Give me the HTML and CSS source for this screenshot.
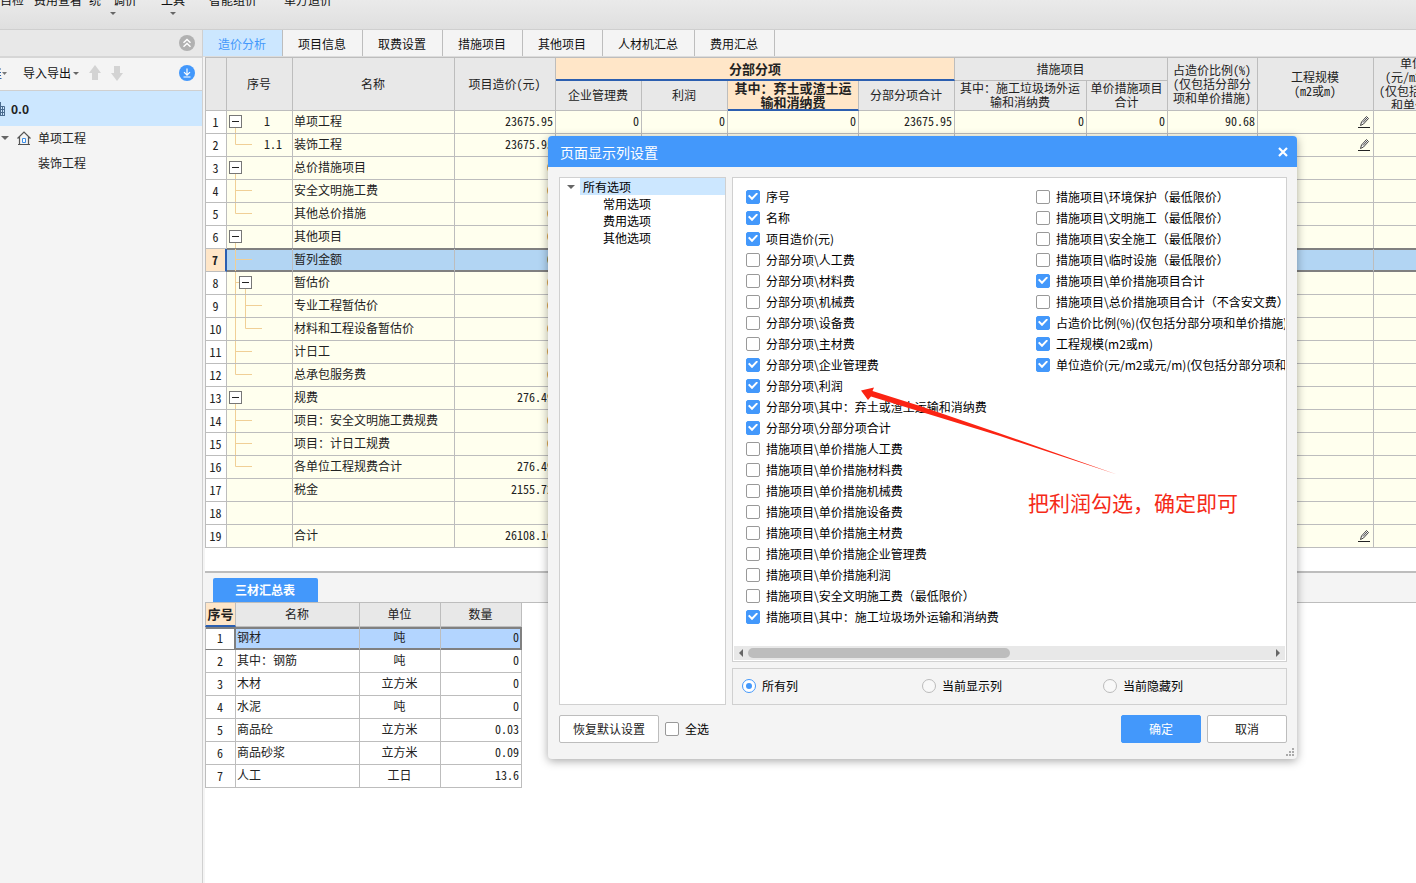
FILE: index.html
```html
<!DOCTYPE html>
<html lang="zh-CN">
<head>
<meta charset="utf-8">
<title>造价分析</title>
<link rel="stylesheet" href="styles.css">
</head>
<body>
<svg class="defs" aria-hidden="true">
  <symbol id="t-root" viewBox="0 0 37 22"><path class="ln" d="M8.5 17v5"/><rect class="bx" x="2.500" y="4.500" width="12" height="12"/><path class="mn" d="M5 10.500h7"/></symbol>
  <symbol id="t-mid" viewBox="0 0 37 22"><path class="ln" d="M8.500 0v22M8 10.500h17"/></symbol>
  <symbol id="t-last" viewBox="0 0 37 22"><path class="ln" d="M8.500 0v10.500H25"/></symbol>
  <symbol id="t-sub" viewBox="0 0 37 22"><path class="ln" d="M8.500 0v22M8 10.500h4M18.500 17v5"/><rect class="bx" x="12.500" y="4.500" width="12" height="12"/><path class="mn" d="M15 10.500h7"/></symbol>
  <symbol id="t-submid" viewBox="0 0 37 22"><path class="ln" d="M8.500 0v22M18.500 0v22M18 10.500h17"/></symbol>
  <symbol id="t-sublast" viewBox="0 0 37 22"><path class="ln" d="M8.500 0v22M18.500 0v10.500H35"/></symbol>
  <symbol id="pencil" viewBox="0 0 12 14"><path d="M2.500 10.500 3.500 7 8.500 1.500l2 2L5.500 9z" fill="#fff" stroke="#444" stroke-width="1"/><path d="M5 7.500l4-4.500" stroke="#444" stroke-width="1"/><path d="M0 12.500h12" stroke="#222"/></symbol>
</svg>
<div class="app">
  <header class="ribbon">
    <button class="rb rb1">自检</button>
    <button class="rb rb2">费用查看</button>
    <button class="rb rb3">统一调价<i class="caret"></i></button>
    <button class="rb rb3">工具<i class="caret"></i></button>
    <button class="rb rb4">智能组价</button>
    <button class="rb rb5">单方造价</button>
  </header>
  <div class="work">
    <aside class="side">
      <div class="side-head">
        <button class="icon-btn" aria-label="收起"><svg width="16" height="16" viewBox="0 0 16 16"><circle cx="8" cy="8" r="8" fill="#b1b1b1"/><path d="M4.500 7.700 8 4.500l3.500 3.200M4.500 11.700 8 8.500l3.500 3.200" fill="none" stroke="#fff" stroke-width="1.500"/></svg></button>
      </div>
      <div class="side-tools">
        <button class="tool cut" aria-label="新建"><svg width="8" height="14" viewBox="0 0 8 14"><path d="M0 3h1M0 6.500h1M0 9.500h1M0 12.500h1.500" stroke="#2f66a8"/><path d="M2 6h5L4.500 9z" fill="#777"/></svg></button>
        <button class="tool">导入导出<i class="caret"></i></button>
        <button class="tool up" aria-label="上移"><svg width="12" height="16" viewBox="0 0 12 16"><path d="M6 0l6 8H9v7H3V8H0z" fill="#d3d3d3"/></svg></button>
        <button class="tool down" aria-label="下移"><svg width="12" height="16" viewBox="0 0 12 16"><path d="M6 16l6-8H9V1H3v7H0z" fill="#d3d3d3"/></svg></button>
        <button class="icon-btn" aria-label="下载"><svg width="16" height="16" viewBox="0 0 16 16"><circle cx="8" cy="8" r="8" fill="#4398fb"/><path d="M8 3.500v6.500M5 7.200l3 3 3-3M4.500 12h7" fill="none" stroke="#fff" stroke-width="1.200"/></svg></button>
      </div>
      <div class="node current"><svg width="6" height="16" viewBox="0 0 6 16"><path d="M.5 1v13.500M0 1.500h1M.5 5.500h4V15M0 14.500h5M1 8.500h3M1 11.500h3M2.500 6v8" fill="none" stroke="#4a6b8f"/></svg><b>0.0</b></div>
      <div class="node project"><i class="caret big"></i><svg width="14" height="14" viewBox="0 0 14 14"><path d="M.5 7.500 7 1l6.500 6.500M2.500 6v7.500M11.500 6v7.500M1 13.500h12" fill="none" stroke="#555" stroke-width="1.200"/><path d="M5.500 11.500V7.500h3v4z" fill="#fff" stroke="#3d8fe8"/></svg><span>单项工程</span></div>
      <div class="node leaf">装饰工程</div>
    </aside>
    <main class="main">
      <nav class="tabs">
        <button class="tab on">造价分析</button><button class="tab">项目信息</button><button class="tab">取费设置</button><button class="tab">措施项目</button><button class="tab">其他项目</button><button class="tab">人材机汇总</button><button class="tab">费用汇总</button>
      </nav>
      <section class="upper">
        <table class="grid cost">
          <colgroup><col class="w22"><col class="w66"><col class="w162"><col class="w101"><col class="w86"><col class="w86"><col class="w131"><col class="w96"><col class="w132"><col class="w81"><col class="w90"><col class="w116"><col class="w102"></colgroup>
          <thead>
            <tr class="h1"><th rowspan="2"></th><th rowspan="2">序号</th><th rowspan="2">名称</th><th rowspan="2">项目造价(元)</th><th colspan="4" class="hot">分部分项</th><th colspan="2">措施项目</th><th rowspan="2">占造价比例(%)<br>(仅包括分部分<br>项和单价措施)</th><th rowspan="2">工程规模<br>(m2或m)</th><th rowspan="2"><div class="tall">单位造价<br>(元/m2或元/m)<br>(仅包括分部分项<br>和单价措施)</div></th></tr>
            <tr class="h2"><th>企业管理费</th><th>利润</th><th class="hot">其中：弃土或渣土运<br>输和消纳费</th><th>分部分项合计</th><th>其中：施工垃圾场外运<br>输和消纳费</th><th>单价措施项目<br>合计</th></tr>
          </thead>
          <tbody>
            <tr><th>1</th><td class="tr"><div><svg><use href="#t-root"/></svg><span>1</span></div></td><td>单项工程</td><td class="n">23675.95</td><td class="n">0</td><td class="n">0</td><td class="n">0</td><td class="n">23675.95</td><td class="n">0</td><td class="n">0</td><td class="n">90.68</td><td class="ed"><svg><use href="#pencil"/></svg></td><td></td></tr>
            <tr><th>2</th><td class="tr"><div><svg><use href="#t-last"/></svg><span>1.1</span></div></td><td>装饰工程</td><td class="n">23675.95</td><td></td><td></td><td></td><td></td><td></td><td></td><td></td><td class="ed"><svg><use href="#pencil"/></svg></td><td></td></tr>
            <tr><th>3</th><td class="tr"><div><svg><use href="#t-root"/></svg></div></td><td>总价措施项目</td><td class="n">0</td><td></td><td></td><td></td><td></td><td></td><td></td><td></td><td></td><td></td></tr>
            <tr><th>4</th><td class="tr"><div><svg><use href="#t-mid"/></svg></div></td><td>安全文明施工费</td><td class="n">0</td><td></td><td></td><td></td><td></td><td></td><td></td><td></td><td></td><td></td></tr>
            <tr><th>5</th><td class="tr"><div><svg><use href="#t-last"/></svg></div></td><td>其他总价措施</td><td class="n">0</td><td></td><td></td><td></td><td></td><td></td><td></td><td></td><td></td><td></td></tr>
            <tr><th>6</th><td class="tr"><div><svg><use href="#t-root"/></svg></div></td><td>其他项目</td><td class="n">0</td><td></td><td></td><td></td><td></td><td></td><td></td><td></td><td></td><td></td></tr>
            <tr class="sel"><th>7</th><td class="tr"><div><svg><use href="#t-mid"/></svg></div></td><td>暂列金额</td><td class="n">0</td><td></td><td></td><td></td><td></td><td></td><td></td><td></td><td></td><td></td></tr>
            <tr><th>8</th><td class="tr"><div><svg><use href="#t-sub"/></svg></div></td><td>暂估价</td><td class="n">0</td><td></td><td></td><td></td><td></td><td></td><td></td><td></td><td></td><td></td></tr>
            <tr><th>9</th><td class="tr"><div><svg><use href="#t-submid"/></svg></div></td><td>专业工程暂估价</td><td class="n">0</td><td></td><td></td><td></td><td></td><td></td><td></td><td></td><td></td><td></td></tr>
            <tr><th>10</th><td class="tr"><div><svg><use href="#t-sublast"/></svg></div></td><td>材料和工程设备暂估价</td><td class="n">0</td><td></td><td></td><td></td><td></td><td></td><td></td><td></td><td></td><td></td></tr>
            <tr><th>11</th><td class="tr"><div><svg><use href="#t-mid"/></svg></div></td><td>计日工</td><td class="n">0</td><td></td><td></td><td></td><td></td><td></td><td></td><td></td><td></td><td></td></tr>
            <tr><th>12</th><td class="tr"><div><svg><use href="#t-last"/></svg></div></td><td>总承包服务费</td><td class="n">0</td><td></td><td></td><td></td><td></td><td></td><td></td><td></td><td></td><td></td></tr>
            <tr><th>13</th><td class="tr"><div><svg><use href="#t-root"/></svg></div></td><td>规费</td><td class="n">276.49</td><td></td><td></td><td></td><td></td><td></td><td></td><td></td><td></td><td></td></tr>
            <tr><th>14</th><td class="tr"><div><svg><use href="#t-mid"/></svg></div></td><td>项目：安全文明施工费规费</td><td class="n">0</td><td></td><td></td><td></td><td></td><td></td><td></td><td></td><td></td><td></td></tr>
            <tr><th>15</th><td class="tr"><div><svg><use href="#t-mid"/></svg></div></td><td>项目：计日工规费</td><td class="n">0</td><td></td><td></td><td></td><td></td><td></td><td></td><td></td><td></td><td></td></tr>
            <tr><th>16</th><td class="tr"><div><svg><use href="#t-last"/></svg></div></td><td>各单位工程规费合计</td><td class="n">276.49</td><td></td><td></td><td></td><td></td><td></td><td></td><td></td><td></td><td></td></tr>
            <tr><th>17</th><td></td><td>税金</td><td class="n">2155.72</td><td></td><td></td><td></td><td></td><td></td><td></td><td></td><td></td><td></td></tr>
            <tr><th>18</th><td></td><td></td><td></td><td></td><td></td><td></td><td></td><td></td><td></td><td></td><td></td><td></td></tr>
            <tr><th>19</th><td></td><td>合计</td><td class="n">26108.16</td><td></td><td></td><td></td><td></td><td></td><td></td><td></td><td class="ed"><svg><use href="#pencil"/></svg></td><td></td></tr>
          </tbody>
        </table>
      </section>
      <section class="lower">
        <div class="lower-bar"><button class="lower-tab">三材汇总表</button></div>
        <table class="grid mat">
          <colgroup><col class="w31"><col class="w124"><col class="w81"><col class="w81"></colgroup>
          <thead><tr><th class="hot">序号</th><th>名称</th><th>单位</th><th>数量</th></tr></thead>
          <tbody>
            <tr class="sel"><th>1</th><td>钢材</td><td class="c">吨</td><td class="n">0</td></tr>
            <tr><th>2</th><td>其中：钢筋</td><td class="c">吨</td><td class="n">0</td></tr>
            <tr><th>3</th><td>木材</td><td class="c">立方米</td><td class="n">0</td></tr>
            <tr><th>4</th><td>水泥</td><td class="c">吨</td><td class="n">0</td></tr>
            <tr><th>5</th><td>商品砼</td><td class="c">立方米</td><td class="n">0.03</td></tr>
            <tr><th>6</th><td>商品砂浆</td><td class="c">立方米</td><td class="n">0.09</td></tr>
            <tr><th>7</th><td>人工</td><td class="c">工日</td><td class="n">13.6</td></tr>
          </tbody>
        </table>
      </section>
    </main>
  </div>
</div>

<div class="dialog" role="dialog" aria-labelledby="dlg-title">
  <div class="dlg-head"><h2 id="dlg-title">页面显示列设置</h2><button aria-label="关闭"><svg width="10" height="10" viewBox="0 0 10 10"><path d="M1 1l8 8M9 1l-8 8" stroke="#fff" stroke-width="2.200"/></svg></button></div>
  <div class="dlg-body">
    <div class="panes">
      <ul class="tree">
        <li class="top"><i class="caret big"></i><span>所有选项</span></li>
        <li>常用选项</li><li>费用选项</li><li>其他选项</li>
      </ul>
      <div class="right">
        <div class="opts">
          <div class="cols">
            <div class="col">
              <label><input type="checkbox" checked>序号</label>
              <label><input type="checkbox" checked>名称</label>
              <label><input type="checkbox" checked>项目造价(元)</label>
              <label><input type="checkbox">分部分项\人工费</label>
              <label><input type="checkbox">分部分项\材料费</label>
              <label><input type="checkbox">分部分项\机械费</label>
              <label><input type="checkbox">分部分项\设备费</label>
              <label><input type="checkbox">分部分项\主材费</label>
              <label><input type="checkbox" checked>分部分项\企业管理费</label>
              <label><input type="checkbox" checked>分部分项\利润</label>
              <label><input type="checkbox" checked>分部分项\其中：弃土或渣土运输和消纳费</label>
              <label><input type="checkbox" checked>分部分项\分部分项合计</label>
              <label><input type="checkbox">措施项目\单价措施人工费</label>
              <label><input type="checkbox">措施项目\单价措施材料费</label>
              <label><input type="checkbox">措施项目\单价措施机械费</label>
              <label><input type="checkbox">措施项目\单价措施设备费</label>
              <label><input type="checkbox">措施项目\单价措施主材费</label>
              <label><input type="checkbox">措施项目\单价措施企业管理费</label>
              <label><input type="checkbox">措施项目\单价措施利润</label>
              <label><input type="checkbox">措施项目\安全文明施工费（最低限价）</label>
              <label><input type="checkbox" checked>措施项目\其中：施工垃圾场外运输和消纳费</label>
            </div>
            <div class="col">
              <label><input type="checkbox">措施项目\环境保护（最低限价）</label>
              <label><input type="checkbox">措施项目\文明施工（最低限价）</label>
              <label><input type="checkbox">措施项目\安全施工（最低限价）</label>
              <label><input type="checkbox">措施项目\临时设施（最低限价）</label>
              <label><input type="checkbox" checked>措施项目\单价措施项目合计</label>
              <label><input type="checkbox">措施项目\总价措施项目合计（不含安文费）</label>
              <label><input type="checkbox" checked>占造价比例(%)(仅包括分部分项和单价措施)</label>
              <label><input type="checkbox" checked>工程规模(m2或m)</label>
              <label><input type="checkbox" checked>单位造价(元/m2或元/m)(仅包括分部分项和单价措施)</label>
            </div>
          </div>
          <div class="hbar"><i class="arr l"></i><div class="track"><div class="thumb"></div></div><i class="arr r"></i></div>
        </div>
        <div class="radios">
          <label><input type="radio" name="show" checked>所有列</label>
          <label><input type="radio" name="show">当前显示列</label>
          <label><input type="radio" name="show">当前隐藏列</label>
        </div>
      </div>
    </div>
    <div class="actions">
      <button class="btn wide">恢复默认设置</button>
      <label><input type="checkbox">全选</label>
      <span class="grow"></span>
      <button class="btn primary">确定</button>
      <button class="btn">取消</button>
    </div>
  </div>
  <svg class="grip" width="8" height="8" viewBox="0 0 8 8"><path d="M6 0h2v2H6zM3 3h2v2H3zM6 3h2v2H6zM0 6h2v2H0zM3 6h2v2H3zM6 6h2v2H6z" fill="#aaa"/></svg>
  <svg class="arrow" width="258" height="92" viewBox="0 0 258 92"><path d="M1 7.500 14 4.500 12.500 8 60 23 140 50.500 257 91.500 140 53 60 28.500 11 13.500 8 17z" fill="#fb2413"/></svg>
  <p class="note">把利润勾选，确定即可</p>
</div>
</body>
</html>
```

FILE: styles.css
```css
* { box-sizing: border-box; }
body { margin: 0; font: 12px/16px "Noto Sans CJK SC", sans-serif; color: #111; background: #fff; overflow: hidden; }
button { font: inherit; color: inherit; border: 0; background: none; padding: 0; }
ul, h2, p { margin: 0; padding: 0; list-style: none; font-weight: 400; }
svg { display: block; flex: none; }
.defs { position: absolute; width: 0; height: 0; }
.ln { fill: none; stroke: #f0cf96; }
.bx { fill: #fff; stroke: #777; }
.mn { stroke: #222; }
.caret { display: inline-block; width: 0; height: 0; border: 3px solid transparent; border-top-color: #666; border-bottom: 0; }
.caret.big { border-width: 4px 4px 0; }

.app { height: 100vh; display: flex; flex-direction: column; }
.ribbon { flex: none; height: 30px; display: flex; align-items: flex-start; overflow: hidden; background: linear-gradient(#eaeaea, #dfdfdf); border-bottom: 1px solid #cfcfcf; }
.rb { display: flex; flex-direction: column; align-items: center; gap: 4px; margin-top: -8px; margin-right: 10px; white-space: nowrap; }
.rb2 { margin-right: 7px; }
.rb3 { margin-right: 24px; }
.rb4 { margin-right: 27px; }
.work { flex: 1; min-height: 0; display: flex; }

.side { flex: none; width: 203px; background: #f4f4f4; border-right: 1px solid #d0d0d0; }
.side-head { height: 28px; display: flex; justify-content: flex-end; align-items: center; padding-right: 7px; background: #e8e8e8; border-bottom: 2px solid #d6d6d6; }
.side-tools { height: 33px; display: flex; align-items: center; padding: 0 7px 2px 0; border-bottom: 1px solid #d0d0d0; }
.side-tools .icon-btn { margin-left: auto; }
.tool { display: flex; align-items: center; gap: 2px; }
.cut { margin-right: 15px; }
.up { margin: 0 10px; }
.node { display: flex; align-items: center; height: 25px; padding-bottom: 2px; color: #222; }
.current { height: 35px; padding: 0; gap: 5px; background: #cce7ff; }
.project { padding-left: 1px; gap: 8px; }
.project span { margin-left: -1px; }
.leaf { padding-left: 38px; }

.main { flex: 1; min-width: 0; display: flex; flex-direction: column; background: #fff; }
.tabs { flex: none; display: flex; height: 27px; background: #f4f4f4; border-bottom: 1px solid #dcdcdc; }
.tab { padding: 2px 16px 0 15px; border-right: 1px solid #bdbdbd; }
.tab.on { background: #cce7ff; color: #4398fb; }
.upper { flex: none; overflow: hidden; padding-bottom: 23px; border-left: 2px solid #f4f4f4; }
.lower { flex: 1; border-left: 2px solid #f4f4f4; }
.lower-bar { height: 32px; display: flex; align-items: flex-end; padding-left: 8px; background: #f4f4f4; border-top: 2px solid #bdbdbd; border-bottom: 1px solid #bdbdbd; }
.lower-tab { height: 24px; padding: 0 23px 0 22px; background: #4398fb; color: #fff; font-weight: 700; border-radius: 2px 2px 0 0; }

.grid { table-layout: fixed; border-collapse: separate; border-spacing: 0; color: #222; }
.cost { width: 1271px; border-top: 1px solid #bdbdbd; }
.mat { width: 317px; }
.grid th, .grid td { padding: 0 2px 2px 1px; border-right: 1px solid #bdbdbd; border-bottom: 1px solid #bdbdbd; height: 23px; font-weight: 400; white-space: nowrap; overflow: hidden; }
.grid tr > th:first-child { border-left: 1px solid #bdbdbd; }
.grid .h2 th:first-child { border-left: 0; }
.grid thead th { padding: 0 1px 1px 0; background: #e8e8e8; line-height: 14px; font-feature-settings: "hwid"; }
.grid .h2 th { height: 30px; }
.grid thead .hot { padding: 0; background: #ffe6c8; font-size: 13px; font-weight: 700; border-bottom: 2px solid #2c5fb0; }
.grid tbody th { padding: 0 1px 1px 0; background: #fff; font-feature-settings: "hwid"; }
.cost td { background: #ffffee; }
.grid .n { text-align: right; font-feature-settings: "hwid"; }
.grid .c { text-align: center; }
.grid .tr { padding: 0; font-feature-settings: "hwid"; }
.tr div { display: flex; align-items: center; height: 22px; }
.tr span { padding-bottom: 2px; }
.tr svg { width: 37px; height: 22px; }
.grid .ed { padding: 0 3px 0 0; }
.ed svg { width: 12px; height: 14px; margin-left: auto; }
.tall { height: 51px; display: flex; align-items: center; justify-content: center; overflow: hidden; }
.grid .sel td { background: #b2d5f3; border-bottom-color: #808080; box-shadow: 0 -1px #808080, inset 0 1px #808080, inset 0 -1px #808080; }
.cost .sel th { background: #ffe6c8; font-weight: 700; border-right: 2px solid #2c5fb0; }
.mat thead th { height: 24px; }
.mat .sel td { background: #b3d5ff; box-shadow: inset 0 2px #808080, inset 0 -1px #808080; }
.mat .sel th { border-right-color: #808080; border-bottom-color: #808080; box-shadow: inset 0 2px #808080, inset -1px 0 #808080; }
.mat .sel td:last-child { border-right-color: #808080; box-shadow: inset 0 2px #808080, inset -1px -1px #808080; }
.w22 { width: 22px; } .w31 { width: 31px; } .w66 { width: 66px; } .w81 { width: 81px; } .w86 { width: 86px; } .w90 { width: 90px; } .w96 { width: 96px; }
.w101 { width: 101px; } .w102 { width: 102px; } .w116 { width: 116px; } .w124 { width: 124px; } .w131 { width: 131px; } .w132 { width: 132px; } .w162 { width: 162px; }

.dialog { position: absolute; left: 548px; top: 136px; width: 749px; background: #f4f4f4; border-radius: 4px; box-shadow: 0 2px 10px rgba(0, 0, 0, .35); color: #000; }
.dlg-head { height: 31px; display: flex; align-items: center; justify-content: space-between; padding: 0 9px 0 12px; background: #4398fb; color: #fff; border-radius: 4px 4px 0 0; }
.dlg-head h2 { font-size: 14px; line-height: 20px; }
.dlg-body { padding: 10px 10px 16px 11px; }
.panes { display: flex; gap: 6px; }
.tree { flex: none; width: 167px; background: #fff; border: 1px solid #d0d0d0; line-height: 17px; }
.tree li { padding-left: 43px; }
.tree .top { display: flex; align-items: center; padding: 0; }
.tree .caret { margin: 0 5px 0 7px; }
.tree span { flex: 1; padding-left: 3px; background: #cce7ff; }
.right { flex: 1; min-width: 0; display: flex; flex-direction: column; gap: 6px; }
.opts { background: #fff; border: 1px solid #d0d0d0; padding: 8px 1px 1px; }
.cols { display: grid; grid-template-columns: 290px 1fr; padding-left: 12px; height: 460px; overflow: hidden; }
.col { min-width: 0; overflow: hidden; }
.dialog label { display: flex; align-items: center; gap: 6px; white-space: nowrap; }
.col label { height: 21px; }
input { appearance: none; flex: none; width: 14px; height: 14px; margin: 0; display: grid; place-items: center; background: #fff; border: 1px solid #999; border-radius: 2px; }
input[type=checkbox]:checked { background: #4398fb; border-color: #4398fb; }
input[type=checkbox]:checked::before { content: ""; width: 10px; height: 8px; background: #fff; clip-path: polygon(0 45%, 14% 28%, 40% 60%, 86% 0, 100% 16%, 40% 96%); }
input[type=radio] { border-color: #bbb; border-radius: 50%; background: #f8f8f8; }
input[type=radio]:checked { border-color: #4398fb; background: #fff; }
input[type=radio]:checked::before { content: ""; width: 6px; height: 6px; border-radius: 50%; background: #4398fb; }
.hbar { display: flex; align-items: center; height: 14px; padding: 0 5px; gap: 5px; background: #e8e8e8; }
.track { flex: 1; }
.thumb { width: 50%; height: 10px; border-radius: 5px; background: #bdbdbd; }
.arr { border: 4px solid transparent; }
.arr.l { border-right-color: #666; border-left: 0; }
.arr.r { border-left-color: #666; border-right: 0; }
.radios { display: grid; grid-template-columns: 180px 181px 1fr; height: 37px; padding: 0 0 1px 9px; border: 1px solid #d0d0d0; }
.actions { display: flex; align-items: center; gap: 6px; margin-top: 10px; }
.grow { flex: 1; }
.btn { width: 80px; height: 28px; background: #fff; border: 1px solid #bdbdbd; border-radius: 2px; color: #222; }
.btn.wide { width: 100px; }
.btn.primary { background: #4398fb; border-color: #4398fb; color: #fff; }
.grip { position: absolute; right: 3px; bottom: 3px; }
.arrow { position: absolute; left: 312px; top: 247px; }
.note { position: absolute; left: 480px; top: 352px; font-size: 21px; line-height: 28px; color: #f52a18; white-space: nowrap; }
```
